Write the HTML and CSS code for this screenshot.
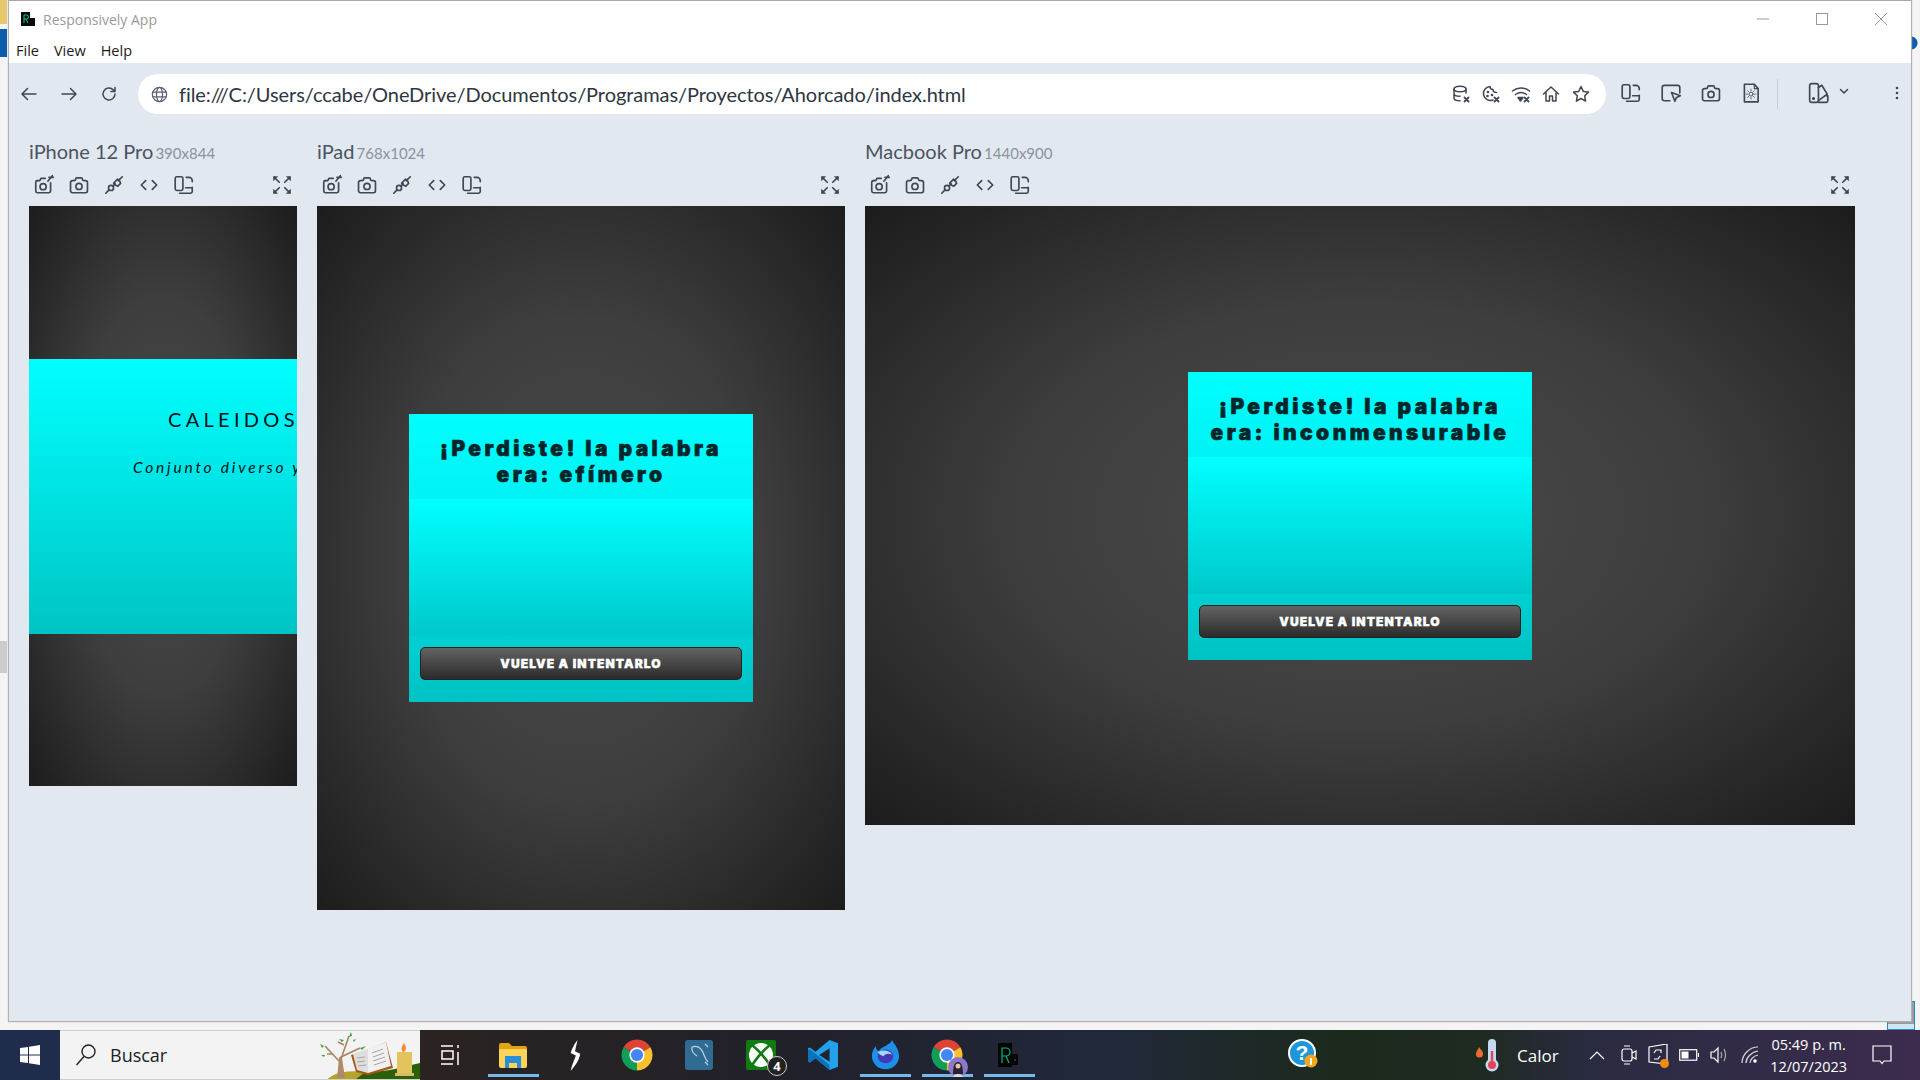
FILE: index.html
```html
<!DOCTYPE html>
<html lang="en">
<head>
    <meta charset="UTF-8">
    <title>Responsively App</title>
    <link rel="stylesheet" href="styles.css">
</head>
<body>
    <!-- shared icons -->
    <svg class="defs" width="0" height="0">
        <symbol id="i-shot" viewBox="0 0 20 20"><path d="M4 6h2.200l1-2h4"/><path d="M2.500 7.500a1.500 1.500 0 0 1 1.500-1.500M2.500 7.500v8a1.500 1.500 0 0 0 1.500 1.500h10.500a1.500 1.500 0 0 0 1.500-1.500V8"/><circle cx="9.200" cy="11.500" r="2.800"/><path d="M13.500 6.500 17.500 1.500M14.500 3h4" /></symbol>
        <symbol id="i-camera" viewBox="0 0 20 20"><path d="M4 6h1.500a1.500 1.500 0 0 0 1.500-1.500 1 1 0 0 1 1-1h4a1 1 0 0 1 1 1A1.500 1.500 0 0 0 14.500 6H16a1.700 1.700 0 0 1 1.700 1.700v7.600A1.700 1.700 0 0 1 16 17H4a1.700 1.700 0 0 1-1.700-1.700V7.700A1.700 1.700 0 0 1 4 6z"/><circle cx="10" cy="11.300" r="2.800"/></symbol>
        <symbol id="i-plug" viewBox="0 0 20 20"><path d="M2.500 17.500 5.500 14.500M14 6l3.500-3.500"/><circle cx="7.300" cy="12.700" r="2.300"/><path d="M9 11l2-2"/><path d="M11.300 6.700 13.300 4.700 15.300 6.700 16 8.500 13.500 11 11.500 10.300 9.700 8.300z"/></symbol>
        <symbol id="i-code" viewBox="0 0 20 20"><path d="M7 6 3 10l4 4M13 6l4 4-4 4"/></symbol>
        <symbol id="i-rotate" viewBox="0 0 20 20"><rect x="2" y="2.500" width="7" height="12.500" rx="1.500"/><path d="M12 3h2.500a3 3 0 0 1 3 3v1M6 17.500h10a1.500 1.500 0 0 0 1.500-1.500v-4M11.500 12.500h6"/></symbol>
        <symbol id="i-full" viewBox="0 0 20 20"><path d="M2 2h4.500L2 6.500zM18 2h-4.500L18 6.500zM2 18h4.500L2 13.500zM18 18h-4.500l4.500-4.500z" fill="currentColor" stroke="none"/><path d="M3 3l4.500 4.500M17 3l-4.500 4.500M3 17l4.500-4.500M17 17l-4.500-4.500"/></symbol>
        <symbol id="i-chrome" viewBox="0 0 24 24"><path fill="#db4437" d="M12 12 2.500 6.500A11 11 0 0 1 21.500 6.500z"/><path fill="#fbc02d" d="M12 12 21.500 6.500A11 11 0 0 1 12 23z"/><path fill="#0f9d58" d="M12 12 12 23A11 11 0 0 1 2.500 6.500z"/><circle cx="12" cy="12" r="5.400" fill="#fff"/><circle cx="12" cy="12" r="4.300" fill="#4285f4"/></symbol>
    </svg>

    <div class="desk">
        <!-- thumbnail of another window, mostly hidden -->
        <div class="peek"></div>
        <div class="window">
            <div class="titlebar">
                <svg class="app-logo" width="14" height="14" viewBox="0 0 14 14"><rect width="9" height="14" fill="#0b0b0b"/><rect x="9" y="6" width="5" height="8" fill="#0b0b0b"/><path d="M3 11V3h2.500a2 2 0 0 1 0 4H3M5 7l2 4" fill="none" stroke="#00d08a" stroke-width="1"/></svg>
                <span class="app-name">Responsively App</span>
                <div class="win-controls">
                    <svg width="14" height="14" viewBox="0 0 14 14"><path d="M1 7h12" stroke="#999"/></svg>
                    <svg width="14" height="14" viewBox="0 0 14 14"><rect x="1.500" y="1.500" width="11" height="11" fill="none" stroke="#999"/></svg>
                    <svg width="14" height="14" viewBox="0 0 14 14"><path d="M1 1l12 12M13 1 1 13" stroke="#999"/></svg>
                </div>
            </div>
            <div class="menubar">
                <span>File</span>
                <span>View</span>
                <span>Help</span>
            </div>

            <div class="app-body">
                <div class="navbar">
                    <svg class="ico nav-ico" viewBox="0 0 20 20"><path d="M17 10H3M8.500 4.500 3 10l5.500 5.500"/></svg>
                    <svg class="ico nav-ico" viewBox="0 0 20 20"><path d="M3 10h14M11.500 4.500 17 10l-5.500 5.500"/></svg>
                    <svg class="ico nav-ico" viewBox="0 0 20 20"><path d="M16 10a6 6 0 1 1-1.800-4.300L16 7.500M16 3.500v4h-4"/></svg>
                    <div class="urlbar">
                        <svg class="ico globe" viewBox="0 0 20 20"><circle cx="10" cy="10" r="7.500"/><ellipse cx="10" cy="10" rx="3.200" ry="7.500"/><path d="M3 7.500h14M3 12.500h14"/></svg>
                        <span class="url">file:///C:/Users/ccabe/OneDrive/Documentos/Programas/Proyectos/Ahorcado/index.html</span>
                        <div class="url-tools">
                            <svg class="ico" viewBox="0 0 20 20"><ellipse cx="9" cy="5" rx="6" ry="2.800"/><path d="M3 5v9c0 1.500 2.500 2.800 6 2.800M15 5v4M3 9.500c0 1.500 2.500 2.800 6 2.800"/><path d="M13.500 13.500l4 4M17.500 13.500l-4 4" stroke-width="1.800"/></svg>
                            <svg class="ico" viewBox="0 0 20 20"><path d="M9 2.500a7 7 0 1 0 3 13.500M9 2.500c0 2 1 3 3 3 0 2 1.500 3 3.500 3"/><circle cx="7" cy="8" r=".6"/><circle cx="6.500" cy="12" r=".6"/><circle cx="11" cy="11" r=".6"/><path d="M13.500 13.500l4 4M17.500 13.500l-4 4" stroke-width="1.800"/></svg>
                            <svg class="ico" viewBox="0 0 20 20"><path d="M1.500 7c5-4 12-4 17 0M4.500 10.500c3.500-2.500 7.500-2.500 11 0"/><path d="M7 13.500h5l-2.500 3.500z" fill="currentColor"/><path d="M13.500 13.500l4 4M17.500 13.500l-4 4" stroke-width="1.800"/></svg>
                            <svg class="ico" viewBox="0 0 20 20"><path d="M2.500 10 10 3l7.500 7M5 8.500V17h3.500v-5h3v5H15V8.500"/></svg>
                            <svg class="ico" viewBox="0 0 20 20"><path d="M10 2.500l2.300 4.900 5.200.7-3.800 3.700.9 5.300-4.600-2.600-4.600 2.600.9-5.300-3.800-3.700 5.200-.7z"/></svg>
                        </div>
                    </div>
                    <div class="nav-tools">
                        <svg class="ico big"><use href="#i-rotate"/></svg>
                        <svg class="ico big" viewBox="0 0 20 20"><path d="M9 17H4a2 2 0 0 1-2-2V5a2 2 0 0 1 2-2h12a2 2 0 0 1 2 2v5"/><path d="M10.500 9.500l8 3-3.500 1.500-1.500 3.500z"/></svg>
                        <svg class="ico big"><use href="#i-camera"/></svg>
                        <svg class="ico big" viewBox="0 0 20 20"><path d="M4 2h9l3.500 4v12H4z"/><path d="M13 2v4h3.500" stroke-width="1"/><circle cx="10" cy="11" r="1.800" stroke-width=".8"/><path d="M10 6.500v1.500M10 14v1.500M5.500 11H7M13 11h1.500M7 8l1 1M12 13l1 1M13 8l-1 1M8 13l-1 1" stroke-width=".7"/></svg>
                    </div>
                    <span class="nav-divider"></span>
                    <svg class="ico big theme" viewBox="0 0 20 20"><rect x="1.500" y="1.500" width="8" height="17" rx="2"/><path d="M9.500 5 12.500 3l5 8-8 6M9.500 18.500h7a1.500 1.500 0 0 0 1.500-1.500v-4.500h-3"/><circle cx="5" cy="15" r=".7"/></svg>
                    <svg class="ico chevron" viewBox="0 0 12 12"><path d="M2.500 4.500 6 8l3.500-3.500"/></svg>
                    <svg class="dots" width="4" height="14" viewBox="0 0 4 14"><circle cx="2" cy="2" r="1.300"/><circle cx="2" cy="7" r="1.300"/><circle cx="2" cy="12" r="1.300"/></svg>
                </div>

                <div class="previews">
                    <section class="device device-phone">
                        <h2 class="device-name">iPhone 12 Pro <small>390x844</small></h2>
                        <div class="device-tools">
                            <svg class="ico"><use href="#i-shot"/></svg>
                            <svg class="ico"><use href="#i-camera"/></svg>
                            <svg class="ico"><use href="#i-plug"/></svg>
                            <svg class="ico"><use href="#i-code"/></svg>
                            <svg class="ico"><use href="#i-rotate"/></svg>
                            <svg class="ico full"><use href="#i-full"/></svg>
                        </div>
                        <div class="viewport">
                            <div class="phone-band">
                                <p class="band-title">CALEIDOSCOPIO</p>
                                <p class="band-sub">Conjunto diverso y cambiante</p>
                            </div>
                        </div>
                    </section>

                    <section class="device device-tablet">
                        <h2 class="device-name">iPad <small>768x1024</small></h2>
                        <div class="device-tools">
                            <svg class="ico"><use href="#i-shot"/></svg>
                            <svg class="ico"><use href="#i-camera"/></svg>
                            <svg class="ico"><use href="#i-plug"/></svg>
                            <svg class="ico"><use href="#i-code"/></svg>
                            <svg class="ico"><use href="#i-rotate"/></svg>
                            <svg class="ico full"><use href="#i-full"/></svg>
                        </div>
                        <div class="viewport">
                            <div class="game-card">
                                <h3 class="card-title">¡Perdiste! la palabra<br>era: efímero</h3>
                                <div class="card-body"></div>
                                <div class="card-foot"><button class="retry">VUELVE A INTENTARLO</button></div>
                            </div>
                        </div>
                    </section>

                    <section class="device device-laptop">
                        <h2 class="device-name">Macbook Pro <small>1440x900</small></h2>
                        <div class="device-tools">
                            <svg class="ico"><use href="#i-shot"/></svg>
                            <svg class="ico"><use href="#i-camera"/></svg>
                            <svg class="ico"><use href="#i-plug"/></svg>
                            <svg class="ico"><use href="#i-code"/></svg>
                            <svg class="ico"><use href="#i-rotate"/></svg>
                            <svg class="ico full"><use href="#i-full"/></svg>
                        </div>
                        <div class="viewport">
                            <div class="game-card">
                                <h3 class="card-title">¡Perdiste! la palabra<br>era: inconmensurable</h3>
                                <div class="card-body"></div>
                                <div class="card-foot"><button class="retry">VUELVE A INTENTARLO</button></div>
                            </div>
                        </div>
                    </section>
                </div>
            </div>
        </div>
    </div>

    <footer class="taskbar">
        <div class="start">
            <svg width="20" height="20" viewBox="0 0 20 20" fill="#fff"><path d="M0 3l8-1.100V9.500H0zM9 1.700 20 0v9.500H9zM0 10.500h8v7.600L0 17zM9 10.500h11V20L9 18.300z"/></svg>
        </div>
        <div class="search">
            <svg width="22" height="24" viewBox="0 0 22 24" fill="none" stroke="#222" stroke-width="1.400"><circle cx="13.500" cy="8.500" r="6.500"/><path d="M9 13.500 1.500 22"/></svg>
            <span>Buscar</span>
            <svg class="doodle" width="100" height="48" viewBox="0 0 100 48">
                <path d="M8 48c8-7 24-8 40-7 20 0 38-6 52-9v16z" fill="#2c6008"/>
                <path d="M8 48c8-8 24-9 36-6l-8 6z" fill="#b6a32a"/>
                <path d="M17 47l2-20c.5-2 3-2 3 0l3 20z" fill="#b08a68"/>
                <path d="M19 30 5 15M21 28 29 5M21 26l19-9M13 23l-6 0M24 14l-6-3" fill="none" stroke="#a98464" stroke-width="1.600"/>
                <path d="M29 6l2-5 1 4zM24 9l-5-1 3 3zM4 15l-4-2 2 4zM40 17l6-2-4 4zM5 24l-4 0 3 2zM33 9l3-1-2 3z" fill="#3aa53a"/>
                <path d="M31 24 47 19 66 11l7 26-25 7-12-3z" fill="#a7561a"/>
                <path d="M33 23l15-5v24l-11-3z" fill="#dedede"/>
                <path d="M48 18l18-7 5 24-23 7z" fill="#f0f0f0"/>
                <path d="M37 27l8-1M37 31l8-1M38 35l8-1M52 22l11-4M53 26l11-4M53 30l12-4M54 34l12-4" stroke="#a6a6a6"/>
                <rect x="77" y="21" width="15" height="21" fill="#e3c45c"/>
                <path d="M83 21c-3-3-1-6 1-9 2 3 3 6 0 9z" fill="#ef8b3a"/>
                <rect x="75" y="42" width="19" height="3" fill="#d8bc62"/>
            </svg>
        </div>
        <div class="task-icons">
            <div class="task">
                <svg width="20" height="24" viewBox="0 0 20 24" fill="none" stroke="#fff" stroke-width="1.500"><path d="M0 3h12M0 21h12M1 8h11v8H1zM17 2v3M17 9v13"/></svg>
            </div>
            <div class="task is-open">
                <svg width="28" height="26" viewBox="0 0 28 26"><path d="M0 3a2 2 0 0 1 2-2h8l3 3h13a2 2 0 0 1 2 2v3H0z" fill="#e2a50f"/><path d="M0 7h26a2 2 0 0 1 2 2v15a2 2 0 0 1-2 2H2a2 2 0 0 1-2-2z" fill="#fcd558"/><path d="M6 14h16v12h-4v-5h-8v5H6z" fill="#2b8fd8"/></svg>
            </div>
            <div class="task">
                <svg width="14" height="31" viewBox="0 0 16 36" fill="#fff"><path d="M11 0C6 6 4 12 3 15l6 3c-2 6-5 12-6 18 5-6 10-12 11-20l-6-3c1-4 2-9 3-13z"/></svg>
            </div>
            <div class="task"><svg width="34" height="34"><use href="#i-chrome"/></svg></div>
            <div class="task">
                <svg width="28" height="30" viewBox="0 0 28 30"><rect width="28" height="30" rx="3" fill="#2f6b93"/><path d="M7 7c6-2 10 2 12 8 1 3 2 5 4 7M7 7c-1 4 2 7 5 9M20 4l3 3M20 22l3 3" fill="none" stroke="#b9d6e6" stroke-width="1.200"/></svg>
            </div>
            <div class="task">
                <div class="xbox">
                    <svg width="30" height="30" viewBox="0 0 30 30"><rect width="30" height="30" rx="2" fill="#107c10"/><circle cx="15" cy="15" r="12" fill="#fff"/><path d="M6 5q9 7 18 20M24 5Q15 12 6 25" fill="none" stroke="#107c10" stroke-width="2.600"/></svg>
                    <span class="badge">4</span>
                </div>
            </div>
            <div class="task">
                <svg width="30" height="30" viewBox="0 0 32 36" preserveAspectRatio="none"><path d="M23 0l9 4v28l-9 4-15-14-6 5-2-1V10l2-1 6 5z" fill="#23a1ea"/><path d="M23 10v16l-11-8z" fill="#20242e"/><path d="M0 12l2-1 21 19v6l-15-14-6 5-2-1z" fill="#0a72bd"/></svg>
            </div>
            <div class="task is-open">
                <svg width="29" height="31" viewBox="0 0 30 36" preserveAspectRatio="none"><path d="M22 0c1 5 7 8 7 19a14 15 0 1 1-28 0C1 13 3 10 5 7c0 3 1 5 3 6 3-6 11-6 14-13z" fill="#1d8fe8"/><circle cx="15" cy="19" r="8" fill="#4338b8"/><path d="M7 14c6-3 12-2 15 3-4-2-8-1-9 2-3-1-5-3-6-5z" fill="#a2d8fb"/></svg>
            </div>
            <div class="task is-open">
                <div class="chrome-user">
                    <svg width="34" height="34"><use href="#i-chrome"/></svg>
                    <svg class="avatar" width="20" height="22" viewBox="0 0 20 22"><circle cx="10" cy="11" r="10" fill="#8b78c8"/><path d="M5 18c0-6 1-12 5-12s5 6 5 12z" fill="#26222e"/><circle cx="10" cy="10" r="2.500" fill="#e6c0b0"/><path d="M5 21c1-4 9-4 10 0z" fill="#ddd"/></svg>
                </div>
            </div>
            <div class="task is-open">
                <svg width="22" height="24" viewBox="0 0 22 24"><rect width="14" height="24" fill="#050505"/><rect x="14" y="11" width="6" height="11" fill="#050505"/><path d="M4 20V5h4a4 4 0 0 1 0 8H4M8 13l3 7" fill="none" stroke="#00b884" stroke-width="1.200"/><circle cx="17" cy="17" r=".7" fill="#00b884"/></svg>
            </div>
        </div>

        <div class="tray">
            <svg class="help" width="30" height="34" viewBox="0 0 30 34"><circle cx="14" cy="15" r="13" fill="#1c97dc" stroke="#fff" stroke-width="2"/><text x="14" y="22" text-anchor="middle" class="help-mark">?</text><circle cx="23" cy="23" r="6.500" fill="#f3a81a"/><rect x="22" y="20" width="2" height="7" fill="#fff"/></svg>
            <div class="weather">
                <svg width="24" height="34" viewBox="0 0 24 34"><path d="M4 9c2 3 4 4 4 7a3.500 3.500 0 0 1-7 0c0-3 2-4 3-7z" fill="#ee6b2f"/><rect x="13" y="1" width="8" height="26" rx="4" fill="#c4d9ee"/><circle cx="17" cy="27" r="6.500" fill="#c4d9ee"/><rect x="15.800" y="13" width="2.400" height="14" fill="#e2435d"/><circle cx="17" cy="27" r="4" fill="#e2435d"/></svg>
                <span>Calor</span>
            </div>
            <svg class="tray-ico chev" width="16" height="10" viewBox="0 0 16 10"><path d="M1 9l7-7 7 7"/></svg>
            <svg class="tray-ico" width="16" height="22" viewBox="0 0 16 22"><rect x="1" y="5" width="10" height="12" rx="2"/><path d="M11 9l4-2v8l-4-2M3 2h6M3 20h6"/></svg>
            <div class="sync">
                <svg class="tray-ico" width="20" height="22" viewBox="0 0 20 22"><path d="M1 3l18-3v20L1 18z"/><path d="M6 9l2-3h5v3M12 12l-2 3H6"/></svg>
                <span class="sync-dot"></span>
            </div>
            <svg class="tray-ico" width="20" height="12" viewBox="0 0 20 12"><rect x=".7" y=".7" width="17" height="10.500"/><rect x="2.500" y="2.500" width="7" height="7" fill="#fff" stroke="none"/><path d="M19.500 4v4"/></svg>
            <svg class="tray-ico" width="20" height="20" viewBox="0 0 20 20"><path d="M1 7v6h3l4 4V3L4 7z"/><path d="M11 7c1 2 1 4 0 6M14 4c2 4 2 8 0 12" opacity=".6"/></svg>
            <svg class="tray-ico" width="18" height="18" viewBox="0 0 18 18"><path d="M1 17C1 9 8 1 17 1M5 17c0-5 5-11 12-12M9 17c0-3 3-7 8-8" opacity=".8"/><circle cx="14" cy="15" r="1.200" fill="#fff"/></svg>
            <div class="clock">
                <span>05:49 p. m.</span>
                <span>12/07/2023</span>
            </div>
            <svg class="tray-ico note" width="20" height="20" viewBox="0 0 20 20"><path d="M1 1h18v15h-7l-2 2.500L8 16H1z"/></svg>
        </div>
    </footer>
</body>
</html>
```

FILE: styles.css
```css
* {
    box-sizing: border-box;
}

html,
body {
    height: 100%;
}

body {
    margin: 0;
    display: flex;
    flex-direction: column;
    height: 1080px;
    overflow: hidden;
    font-family: "Lato", sans-serif;
    background-color: #f4f4f4;
}

.defs {
    position: absolute;
}

/* whatever is behind the app window */
.desk {
    position: relative;
    flex: 1;
    min-height: 0;
    padding: 0 9px 9px 9px;
    background-color: #f4f4f4;
    background-image:
        radial-gradient(circle at 1911px 43px, #0b5cad 6px, transparent 7px),
        linear-gradient(to right, #0b5cad 7px, transparent 7px),
        linear-gradient(to right, #cccccc 7px, transparent 7px),
        linear-gradient(to right, #e6c76a 7px, transparent 7px);
    background-repeat: no-repeat;
    background-size: 100% 100%, 100% 28px, 100% 32px, 100% 24px;
    background-position: 0 0, 0 29px, 0 641px, 0 0;
}

.peek {
    position: absolute;
    left: 1887px;
    top: 1001px;
    width: 28px;
    height: 29px;
    border: 1px solid #1c8fcc;
    background: linear-gradient(to bottom, #9a9a9a 22px, #cfe6f0 22px);
}

.window {
    position: relative;
    height: 100%;
    display: flex;
    flex-direction: column;
    background: #fff;
    border-top: 1px solid #a8a8a8;
    box-shadow: 0 0 1px 1px #b0b0b0;
}

.titlebar {
    height: 36px;
    display: flex;
    align-items: center;
    padding-left: 12px;
    flex-shrink: 0;
}

.app-name {
    margin-left: 8px;
    font-family: "Open Sans", sans-serif;
    font-size: 14px;
    color: #9a9a9a;
}

.win-controls {
    margin-left: auto;
    display: flex;
    gap: 45px;
    padding-right: 23px;
}

.menubar {
    height: 26px;
    display: flex;
    gap: 15px;
    align-items: center;
    padding-left: 7px;
    font-family: "Open Sans", sans-serif;
    font-size: 14.500px;
    color: #1c1c1c;
    flex-shrink: 0;
}

.app-body {
    flex: 1;
    min-height: 0;
    background: #e2e8f0;
    overflow: hidden;
}

.ico {
    width: 22px;
    height: 22px;
    fill: none;
    stroke: #3f4754;
    stroke-width: 1.500;
    stroke-linecap: round;
    stroke-linejoin: round;
    color: #3f4754;
    flex-shrink: 0;
}

.navbar {
    height: 51px;
    padding-top: 11px;
    display: flex;
    align-items: flex-start;
}

.nav-ico {
    width: 20px;
    height: 20px;
    margin-top: 10px;
    margin-left: 20px;
}

.nav-ico:first-child {
    margin-left: 10px;
}

.urlbar {
    width: 1468px;
    height: 40px;
    margin-left: 19px;
    display: flex;
    align-items: center;
    background: #fff;
    border-radius: 20px;
    padding: 0 15px 0 12px;
}

.globe {
    width: 19px;
    height: 19px;
    stroke: #5a6270;
    stroke-width: 1.300;
}

.url {
    margin-left: 10px;
    font-size: 20px;
    letter-spacing: -0.06px;
    color: #2f3542;
    white-space: nowrap;
}

.url-tools {
    margin-left: auto;
    display: flex;
    gap: 10px;
}

.url-tools .ico {
    width: 20px;
    height: 20px;
}

.nav-tools {
    display: flex;
    gap: 18px;
    margin-left: 14px;
    margin-top: 8px;
}

.big {
    width: 22px;
    height: 22px;
}

.nav-divider {
    width: 1px;
    height: 30px;
    margin: 5px 0 0 15px;
    background: #c6ccd6;
}

.theme {
    margin: 8px 0 0 30px;
}

.chevron {
    width: 12px;
    height: 12px;
    margin: 11px 0 0 8px;
}

.dots {
    margin: 12px 0 0 45px;
    fill: #3f4754;
}

.previews {
    display: flex;
    align-items: flex-start;
    gap: 20px;
    padding: 23px 0 0 20px;
}

.device-phone {
    width: 268px;
}

.device-tablet {
    width: 528px;
}

.device-laptop {
    width: 990px;
}

.device-name {
    margin: 0;
    height: 28px;
    font-size: 20px;
    font-weight: 400;
    line-height: 28px;
    color: #4a5462;
    white-space: nowrap;
}

.device-name small {
    margin-left: -3px;
    font-size: 15px;
    color: #8a929e;
}

.device-tools {
    display: flex;
    gap: 13px;
    height: 39px;
    margin-bottom: 2px;
    align-items: center;
    padding-left: 4px;
    padding-right: 4px;
}

.device-tools .full {
    margin-left: auto;
}

.viewport {
    display: flex;
    align-items: center;
    justify-content: center;
    overflow: hidden;
    background: radial-gradient(ellipse at center, #4a4a4a 0%, #3e3e3e 48%, #1c1c1c 100%);
}

.device-phone .viewport {
    height: 580px;
}

.device-tablet .viewport {
    height: 704px;
}

.device-laptop .viewport {
    height: 619px;
}

.phone-band {
    width: 100%;
    height: 275px;
    padding: 48px 0 0 0;
    background: linear-gradient(to bottom, #00ffff, #00c4c4);
    white-space: nowrap;
    color: #03141a;
}

.band-title {
    margin: 0 0 0 139px;
    font-size: 20px;
    font-weight: 400;
    letter-spacing: 4.300px;
    line-height: 24px;
}

.band-sub {
    margin: 26px 0 0 104px;
    font-size: 15.500px;
    font-style: italic;
    font-weight: 400;
    letter-spacing: 2.800px;
    line-height: 20px;
}

.game-card {
    width: 344px;
    height: 288px;
    display: flex;
    flex-direction: column;
}

.card-title {
    height: 85px;
    margin: 0;
    padding: 22px 4px 0;
    font-family: "Inter", sans-serif;
    font-size: 21px;
    font-weight: 900;
    line-height: 26px;
    letter-spacing: 3.400px;
    -webkit-text-stroke: 0.6px #04262b;
    text-align: center;
    white-space: nowrap;
    color: #04262b;
    background: linear-gradient(to bottom, #00ffff, #00f2f4);
}

.card-body {
    height: 137px;
    background: linear-gradient(to bottom, #00ffff, #00c8ca);
}

.card-foot {
    flex: 1;
    padding: 11px;
    background: linear-gradient(to bottom, #00d0d2, #00c2c4);
}

.retry {
    display: block;
    width: 100%;
    height: 33px;
    border: 1px solid #222;
    border-radius: 5px;
    font-family: "Inter", sans-serif;
    font-size: 12px;
    font-weight: 900;
    letter-spacing: 1.100px;
    -webkit-text-stroke: 0.4px #fff;
    color: #fff;
    background: linear-gradient(to bottom, #636363, #2b2b2b);
}

.taskbar {
    position: relative;
    height: 50px;
    flex-shrink: 0;
    display: flex;
    background: linear-gradient(to right, #1f2c4c 0, #1f2c4c 60px, #2a2321 430px, #21212b 800px, #20283a 1100px, #1c2a1c 1350px, #1f2a22 1480px, #2a2b42 1600px, #3c2c4e 1920px);
}

.start {
    width: 60px;
    display: flex;
    align-items: center;
    justify-content: center;
}

.search {
    width: 360px;
    display: flex;
    align-items: center;
    padding-left: 15px;
    background: #f3f3f3;
    border: 1px solid #cfcfcf;
    border-width: 1px 0;
    font-family: "Open Sans", sans-serif;
    font-size: 18px;
    color: #222;
}

.search span {
    margin-left: 13px;
}

.doodle {
    margin-left: auto;
}

.task-icons {
    display: flex;
}

.task {
    width: 62px;
    display: flex;
    align-items: center;
    justify-content: center;
    border-bottom: 3px solid transparent;
    padding-top: 3px;
}

.task.is-open {
    background: linear-gradient(#76b9ed, #76b9ed) no-repeat center bottom / 51px 3px;
}

.xbox,
.chrome-user,
.sync {
    position: relative;
    display: flex;
}

.badge {
    position: absolute;
    right: -11px;
    bottom: -6px;
    width: 20px;
    height: 20px;
    border: 1px solid #ccc;
    border-radius: 50%;
    background: #222;
    color: #fff;
    font-family: "Open Sans", sans-serif;
    font-size: 13px;
    font-weight: 700;
    line-height: 18px;
    text-align: center;
}

.avatar {
    position: absolute;
    right: -4px;
    bottom: -6px;
}

.tray {
    flex: 1;
    display: flex;
    align-items: center;
    font-family: "Open Sans", sans-serif;
    color: #fff;
}

.help {
    margin-left: 248px;
}

.help-mark {
    font-family: "Liberation Sans", sans-serif;
    font-size: 21px;
    font-weight: 700;
    fill: #fff;
}

.weather {
    display: flex;
    align-items: center;
    margin-left: 157px;
    font-size: 17px;
}

.weather span {
    margin-left: 18px;
}

.tray-ico {
    fill: none;
    stroke: #fff;
    stroke-width: 1.200;
    flex-shrink: 0;
}

.tray-ico,
.sync {
    margin-left: 11px;
}

.tray .chev {
    margin-left: 30px;
    margin-right: 5px;
}

.sync .tray-ico {
    margin-left: 0;
}

.sync-dot {
    position: absolute;
    right: -1px;
    bottom: -2px;
    width: 9px;
    height: 9px;
    border-radius: 50%;
    background: #f58a0b;
}

.clock {
    display: flex;
    flex-direction: column;
    align-items: center;
    gap: 3px;
    width: 76px;
    margin-left: 12px;
    font-size: 14.500px;
    line-height: 19px;
}

.tray .note {
    margin-left: 25px;
}
```
